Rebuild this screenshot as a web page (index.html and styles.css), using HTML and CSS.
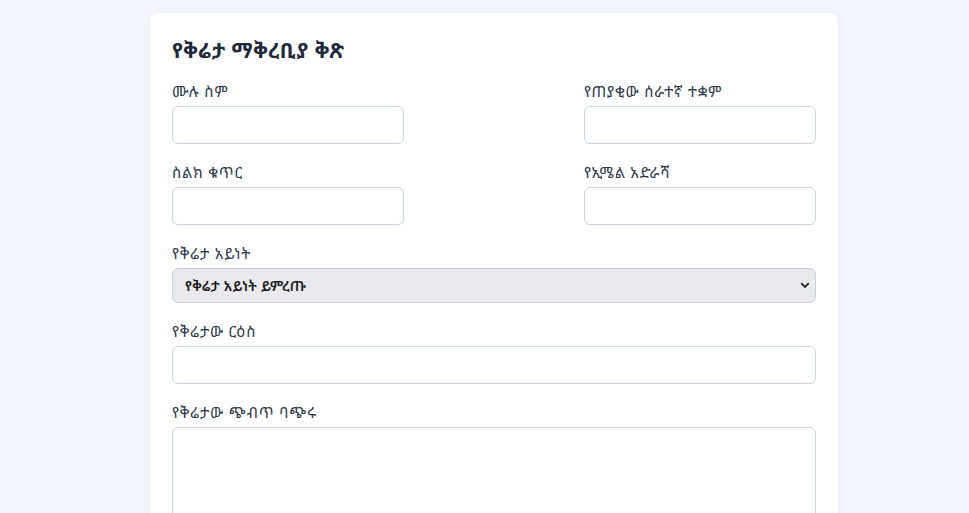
FILE: index.html
```html
<!DOCTYPE html>
<html lang="am">
<head>
<meta charset="utf-8">
<title>የቅሬታ ማቅረቢያ ቅጽ</title>
<link rel="stylesheet" href="styles.css">
</head>
<body>
<main class="card">
  <h1 class="title">የቅሬታ ማቅረቢያ ቅጽ</h1>
  <form class="form">
    <div class="row">
      <div class="field half">
        <label class="label">ሙሉ ስም</label>
        <input class="input" type="text">
      </div>
      <div class="field half">
        <label class="label">የጠያቂው ሰራተኛ ተቋም</label>
        <input class="input" type="text">
      </div>
    </div>
    <div class="row">
      <div class="field half">
        <label class="label">ስልክ ቁጥር</label>
        <input class="input" type="text">
      </div>
      <div class="field half">
        <label class="label">የኢሜል አድራሻ</label>
        <input class="input" type="text">
      </div>
    </div>
    <div class="field">
      <label class="label">የቅሬታ አይነት</label>
      <div class="select-wrap">
        <select class="select">
          <option>የቅሬታ አይነት ይምረጡ</option>
        </select>
        <svg class="chev" width="10" height="7" viewBox="0 0 10 7"><path d="M1.2 1.2 L5 5 L8.8 1.2" fill="none" stroke="#222" stroke-width="1.8"/></svg>
      </div>
    </div>
    <div class="field">
      <label class="label">የቅሬታው ርዕስ</label>
      <input class="input" type="text">
    </div>
    <div class="field">
      <label class="label">የቅሬታው ጭብጥ ባጭሩ</label>
      <textarea class="textarea"></textarea>
    </div>
  </form>
</main>
</body>
</html>
```
FILE: styles.css
```css
* { box-sizing: border-box; }
html, body { margin: 0; padding: 0; }
body {
  background: #f3f6fd;
  font-family: "Noto Sans", "Noto Sans Ethiopic", "DejaVu Sans", sans-serif;
  color: #2d3748;
}
.card {
  width: 688px;
  margin: 13px 0 0 150px;
  background: #fff;
  border-radius: 8px;
  box-shadow: 0 2px 10px rgba(30, 50, 120, 0.06);
  padding: 24px 22px 40px 22px;
}
.title {
  margin: 0 0 19px 0;
  font-size: 21px;
  letter-spacing: 0.5px;
  font-weight: 700;
  color: #1f2a3a;
  line-height: 26px;
}
.form { display: flex; flex-direction: column; gap: 19px; }
.row { display: flex; justify-content: space-between; }
.field { display: flex; flex-direction: column; }
.half { width: 232px; }
.label {
  font-size: 15px;
  letter-spacing: 0.8px;
  line-height: 18px;
  color: #2d3748;
  margin-bottom: 6px;
}
.input, .select, .textarea {
  width: 100%;
  border: 1px solid #c8d3e1;
  border-radius: 6px;
  background: #fff;
  font: inherit;
}
.input { height: 38px; }
.select-wrap { position: relative; }
.select {
  height: 35px;
  appearance: none;
  -webkit-appearance: none;
  background: #e9e9ee;
  padding: 0 12px;
  font-size: 14px;
  font-weight: 600;
  letter-spacing: 0.3px;
  color: #1a1a1a;
}
.chev { position: absolute; right: 6px; top: 14px; pointer-events: none; }
.textarea { height: 110px; resize: none; }
```
